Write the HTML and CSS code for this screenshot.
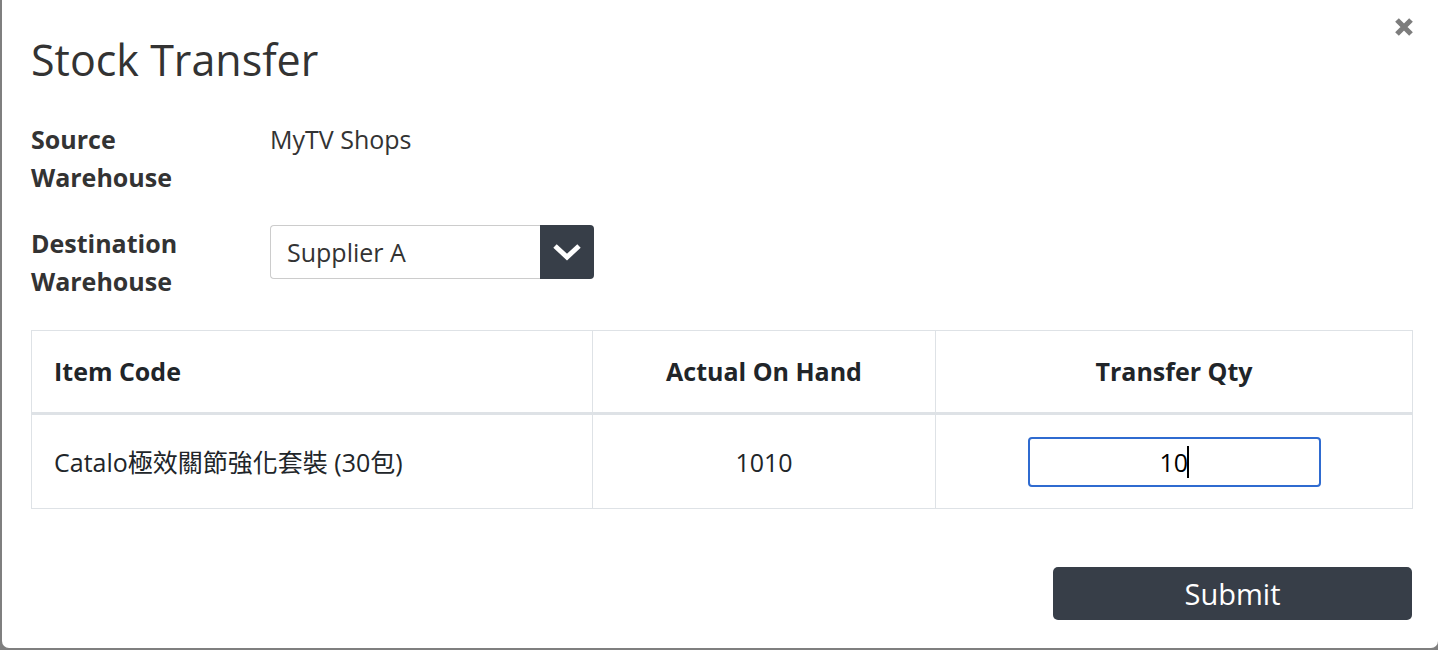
FILE: index.html
```html
<!DOCTYPE html>
<html lang="en">
<head>
<meta charset="utf-8">
<title>Stock Transfer</title>
<link rel="stylesheet" href="styles.css">
</head>
<body>
<div class="modal">
  <button class="close" aria-label="Close">
    <svg width="20" height="20" viewBox="0 0 20 20"><path d="M3 3L17 17M17 3L3 17" stroke="#7d7d7d" stroke-width="5.2" stroke-linecap="butt"/></svg>
  </button>
  <h1 class="title">Stock Transfer</h1>
  <div class="form">
    <div class="label">Source<br>Warehouse</div>
    <div class="value">MyTV Shops</div>
    <div class="label">Destination<br>Warehouse</div>
    <div class="value">
      <div class="select">
        <span class="select-text">Supplier A</span>
        <span class="select-btn">
          <svg width="30" height="18" viewBox="0 0 30 18"><path d="M3 3L15 14L27 3" fill="none" stroke="#fff" stroke-width="5"/></svg>
        </span>
      </div>
    </div>
  </div>
  <table class="grid">
    <colgroup><col class="c1"><col class="c2"><col class="c3"></colgroup>
    <thead>
      <tr><th class="left">Item Code</th><th>Actual On Hand</th><th>Transfer Qty</th></tr>
    </thead>
    <tbody>
      <tr>
        <td class="left">Catalo極效關節強化套裝 (30包)</td>
        <td>1010</td>
        <td><div class="qty"><span>10</span><span class="caret"></span></div></td>
      </tr>
    </tbody>
  </table>
  <div class="actions"><button class="submit">Submit</button></div>
</div>
</body>
</html>
```
FILE: styles.css
```css
html, body {
  margin: 0;
  padding: 0;
}
body {
  background: #7f7f7f;
  font-family: "Open Sans", "Noto Sans CJK TC", sans-serif;
  color: #333;
  height: 650px;
  overflow: hidden;
}
.modal {
  position: relative;
  margin-left: 2px;
  height: 648px;
  background: #fff;
  border-radius: 0 0 7px 7px;
  padding: 33px 26px 0 29px;
  box-sizing: border-box;
}
.close {
  position: absolute;
  top: 17px;
  right: 24px;
  padding: 0;
  border: 0;
  background: none;
  width: 20px;
  height: 20px;
  display: block;
}
.close svg { display: block; }
.title {
  margin: 0;
  font-size: 43px;
  font-weight: 400;
  line-height: 53px;
  color: #333;
}
.form {
  display: grid;
  grid-template-columns: 239px 1fr;
  row-gap: 29px;
  margin-top: 35px;
  font-size: 25px;
  line-height: 37.5px;
}
.label {
  font-weight: 700;
  color: #333;
}
.value { color: #333; }
.select {
  display: flex;
  width: 324px;
  height: 54px;
  box-sizing: border-box;
}
.select-text {
  flex: 1;
  border: 1px solid #ccc;
  border-right: 0;
  border-radius: 4px 0 0 4px;
  padding-left: 16px;
  line-height: 52px;
  color: #333;
}
.select-btn {
  width: 54px;
  background: #373e48;
  border-radius: 0 4px 4px 0;
  display: flex;
  align-items: center;
  justify-content: center;
}
.select-btn svg { display: block; }
.grid {
  margin-top: 30px;
  width: 1381px;
  border-collapse: collapse;
  table-layout: fixed;
  font-size: 25px;
  line-height: 37px;
  color: #212529;
}
.c1 { width: 561px; }
.c2 { width: 343px; }
.c3 { width: 477px; }
.grid th, .grid td {
  border: 1.5px solid #dee2e6;
  text-align: center;
  vertical-align: middle;
}
.grid th {
  font-weight: 700;
  padding: 22px;
  height: 37px;
  border-bottom: 3.5px solid #dee2e6;
}
.grid td {
  padding: 22px 22px 21px;
  height: 50px;
  box-sizing: content-box;
}
.grid .left {
  text-align: left;
}
.qty {
  width: 293px;
  height: 50px;
  margin: 0 auto;
  box-sizing: border-box;
  border: 2.5px solid #2f6bd0;
  border-radius: 4px;
  display: flex;
  align-items: center;
  justify-content: center;
  color: #000;
  font-size: 25px;
}
.caret {
  display: inline-block;
  width: 1.5px;
  height: 32px;
  background: #000;
  margin-left: -1px;
}
.actions {
  display: flex;
  justify-content: flex-end;
  margin-top: 58px;
}
.submit {
  width: 359px;
  height: 53px;
  background: #373e48;
  color: #fff;
  border: 0;
  border-radius: 5px;
  font-family: "Open Sans", sans-serif;
  font-size: 29px;
  padding: 0;
}
```
